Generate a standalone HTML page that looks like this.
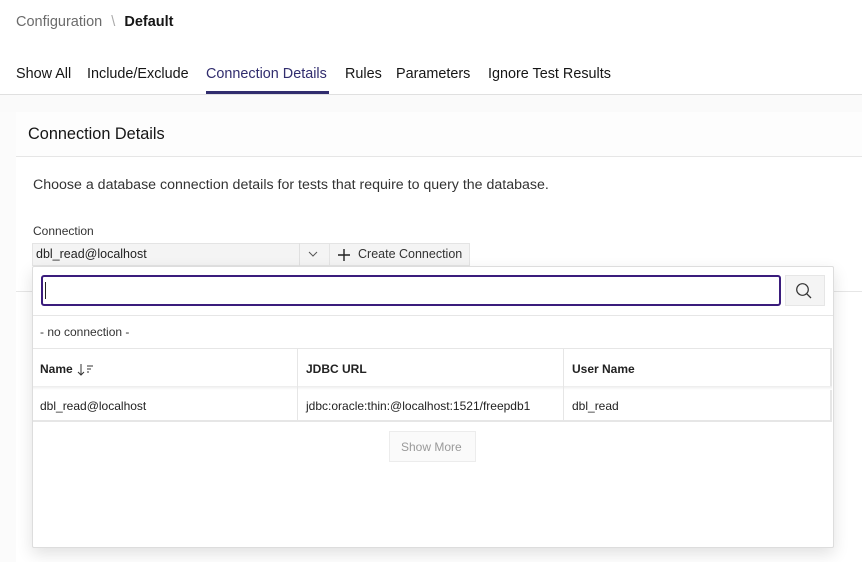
<!DOCTYPE html>
<html><head><style>
*{box-sizing:border-box;margin:0;padding:0}
body{width:862px;height:562px;overflow:hidden;background:#fff;font-family:"Liberation Sans",sans-serif;color:#161616;position:relative}
.a{position:absolute;white-space:nowrap}
</style></head><body>
<div class="a" style="left:16px;top:14px;font-size:14.5px;color:#6b6b6b">Configuration <span style="color:#aaa;margin:0 5px">\</span> <b style="color:#161616">Default</b></div>
<div class="a" style="left:16px;top:66px;font-size:14.4px;color:#161616">
<span style="position:absolute;left:0">Show All</span>
<span style="position:absolute;left:71px">Include/Exclude</span>
<span style="position:absolute;left:190px;color:#312d6e">Connection Details</span>
<span style="position:absolute;left:329px">Rules</span>
<span style="position:absolute;left:380px">Parameters</span>
<span style="position:absolute;left:472px">Ignore Test Results</span>
</div>
<div class="a" style="left:206px;top:91px;width:123px;height:3px;background:#312d6e"></div>
<div class="a" style="left:0;top:94px;width:862px;height:1px;background:#e0e0e0"></div>
<div class="a" style="left:0;top:95px;width:862px;height:17px;background:#fafafa"></div>
<div class="a" style="left:0;top:112px;width:16px;height:450px;background:#fbfbfb"></div>
<div class="a" style="left:16px;top:112px;width:846px;height:45px;background:#fdfdfd;border-bottom:1px solid #e6e6e6"></div>
<div class="a" style="left:28px;top:125px;font-size:16.3px;color:#161616">Connection Details</div>
<div class="a" style="left:33px;top:177px;font-size:14.2px;color:#333">Choose a database connection details for tests that require to query the database.</div>
<div class="a" style="left:33px;top:224px;font-size:12px;color:#333">Connection</div>
<div class="a" style="left:32px;top:243px;width:298px;height:23px;background:#f4f4f4;border:1px solid #e4e4e4"></div>
<div class="a" style="left:36px;top:247px;font-size:12.5px;color:#222">dbl_read@localhost</div>
<div class="a" style="left:299px;top:243px;width:1px;height:23px;background:#e0e0e0"></div>
<svg class="a" style="left:308px;top:250px" width="10" height="8"><path d="M1 2 L5 6 L9 2" fill="none" stroke="#555" stroke-width="1"/></svg>
<div class="a" style="left:329px;top:243px;width:141px;height:23px;background:#f4f4f4;border:1px solid #e4e4e4"></div>
<svg class="a" style="left:338px;top:249px" width="12" height="12"><path d="M6 0V12M0 6H12" stroke="#222" stroke-width="1.4"/></svg>
<div class="a" style="left:358px;top:247px;font-size:12.5px;color:#333">Create Connection</div>
<div class="a" style="left:16px;top:291px;width:846px;height:1px;background:#e6e6e6"></div>
<div class="a" style="left:32px;top:266px;width:802px;height:282px;background:#fff;border:1px solid #ddd;border-radius:2px;box-shadow:0 6px 16px rgba(0,0,0,.12)"></div>
<div class="a" style="left:41px;top:275px;width:740px;height:31px;border:2px solid #3a1c7c;border-radius:3px"></div>
<div class="a" style="left:45px;top:282px;width:1px;height:17px;background:#222"></div>
<div class="a" style="left:785px;top:275px;width:40px;height:31px;background:#f4f4f4;border:1px solid #e6e6e6"></div>
<svg class="a" style="left:795px;top:282px" width="18" height="18"><circle cx="7.5" cy="7.5" r="5.8" fill="none" stroke="#333" stroke-width="1.2"/><path d="M11.8 11.8L16 16" stroke="#333" stroke-width="1.3"/></svg>
<div class="a" style="left:33px;top:315px;width:800px;height:1px;background:#e6e6e6"></div>
<div class="a" style="left:40px;top:325px;font-size:12px;color:#333">- no connection -</div>
<div class="a" style="left:33px;top:348px;width:799px;height:74px;border-top:1px solid #e6e6e6;border-bottom:2px solid #e6e6e6;border-right:2px solid #e6e6e6"></div>
<div class="a" style="left:33px;top:386px;width:799px;height:4px;background:linear-gradient(#ececec,#fff)"></div>
<div class="a" style="left:297px;top:348px;width:1px;height:73px;background:#e6e6e6"></div>
<div class="a" style="left:563px;top:348px;width:1px;height:73px;background:#e6e6e6"></div>
<div class="a" style="left:40px;top:362px;font-size:12px;font-weight:bold;color:#222">Name</div>
<svg class="a" style="left:77px;top:363px" width="18" height="14"><path d="M4 1V12M1 9L4 12L7 9" fill="none" stroke="#333" stroke-width="1"/><path d="M10 3H16M10 6H14M10 9H12" stroke="#333" stroke-width="1"/></svg>
<div class="a" style="left:306px;top:362px;font-size:12px;font-weight:bold;color:#222">JDBC URL</div>
<div class="a" style="left:572px;top:362px;font-size:12px;font-weight:bold;color:#222">User Name</div>
<div class="a" style="left:40px;top:399px;font-size:12px;color:#222">dbl_read@localhost</div>
<div class="a" style="left:306px;top:399px;font-size:12px;color:#222">jdbc:oracle:thin:@localhost:1521/freepdb1</div>
<div class="a" style="left:572px;top:399px;font-size:12px;color:#222">dbl_read</div>
<div class="a" style="left:389px;top:431px;width:87px;height:31px;background:#fafafa;border:1px solid #ececec"></div>
<div class="a" style="left:401px;top:440px;font-size:12px;color:#9a9a9a">Show More</div>
</body></html>
